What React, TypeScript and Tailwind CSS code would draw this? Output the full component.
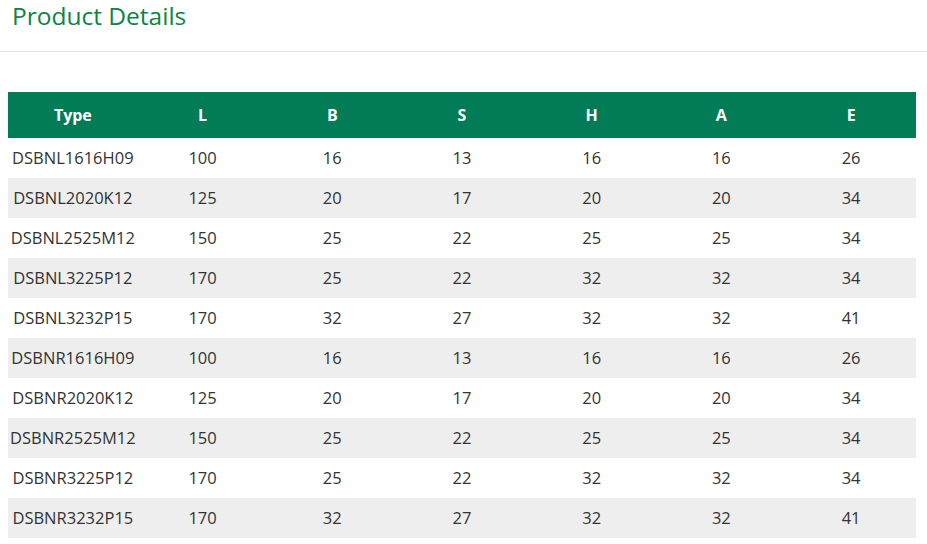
import React from "react";

type Row = [string, number, number, number, number, number, number];

const headers = ["Type", "L", "B", "S", "H", "A", "E"];

const rows: Row[] = [
  ["DSBNL1616H09", 100, 16, 13, 16, 16, 26],
  ["DSBNL2020K12", 125, 20, 17, 20, 20, 34],
  ["DSBNL2525M12", 150, 25, 22, 25, 25, 34],
  ["DSBNL3225P12", 170, 25, 22, 32, 32, 34],
  ["DSBNL3232P15", 170, 32, 27, 32, 32, 41],
  ["DSBNR1616H09", 100, 16, 13, 16, 16, 26],
  ["DSBNR2020K12", 125, 20, 17, 20, 20, 34],
  ["DSBNR2525M12", 150, 25, 22, 25, 25, 34],
  ["DSBNR3225P12", 170, 25, 22, 32, 32, 34],
  ["DSBNR3232P15", 170, 32, 27, 32, 32, 41],
];

const App: React.FC = () => {
  return (
    <div className="w-[927px] bg-white font-['Open_Sans',sans-serif]">
      <div className="border-b border-[#e5e5e5] px-3 h-[52px]">
        <h1 className="text-[24.5px] leading-[32px] text-[#0b8446]">
          Product Details
        </h1>
      </div>
      <div className="px-2 pt-10">
        <table className="w-[908px] table-fixed border-collapse">
          <thead>
            <tr className="bg-[#017c57] h-[46px]">
              {headers.map((h) => (
                <th
                  key={h}
                  className="text-center text-[16px] font-bold text-white"
                >
                  {h}
                </th>
              ))}
            </tr>
          </thead>
          <tbody>
            {rows.map((r, i) => (
              <tr
                key={r[0]}
                className={i % 2 === 1 ? "h-10 bg-[#eeeeee]" : "h-10 bg-white"}
              >
                {r.map((c, j) => (
                  <td
                    key={j}
                    className="text-center text-[16.5px] text-[#333333]"
                  >
                    {c}
                  </td>
                ))}
              </tr>
            ))}
          </tbody>
        </table>
      </div>
    </div>
  );
};

export default App;
